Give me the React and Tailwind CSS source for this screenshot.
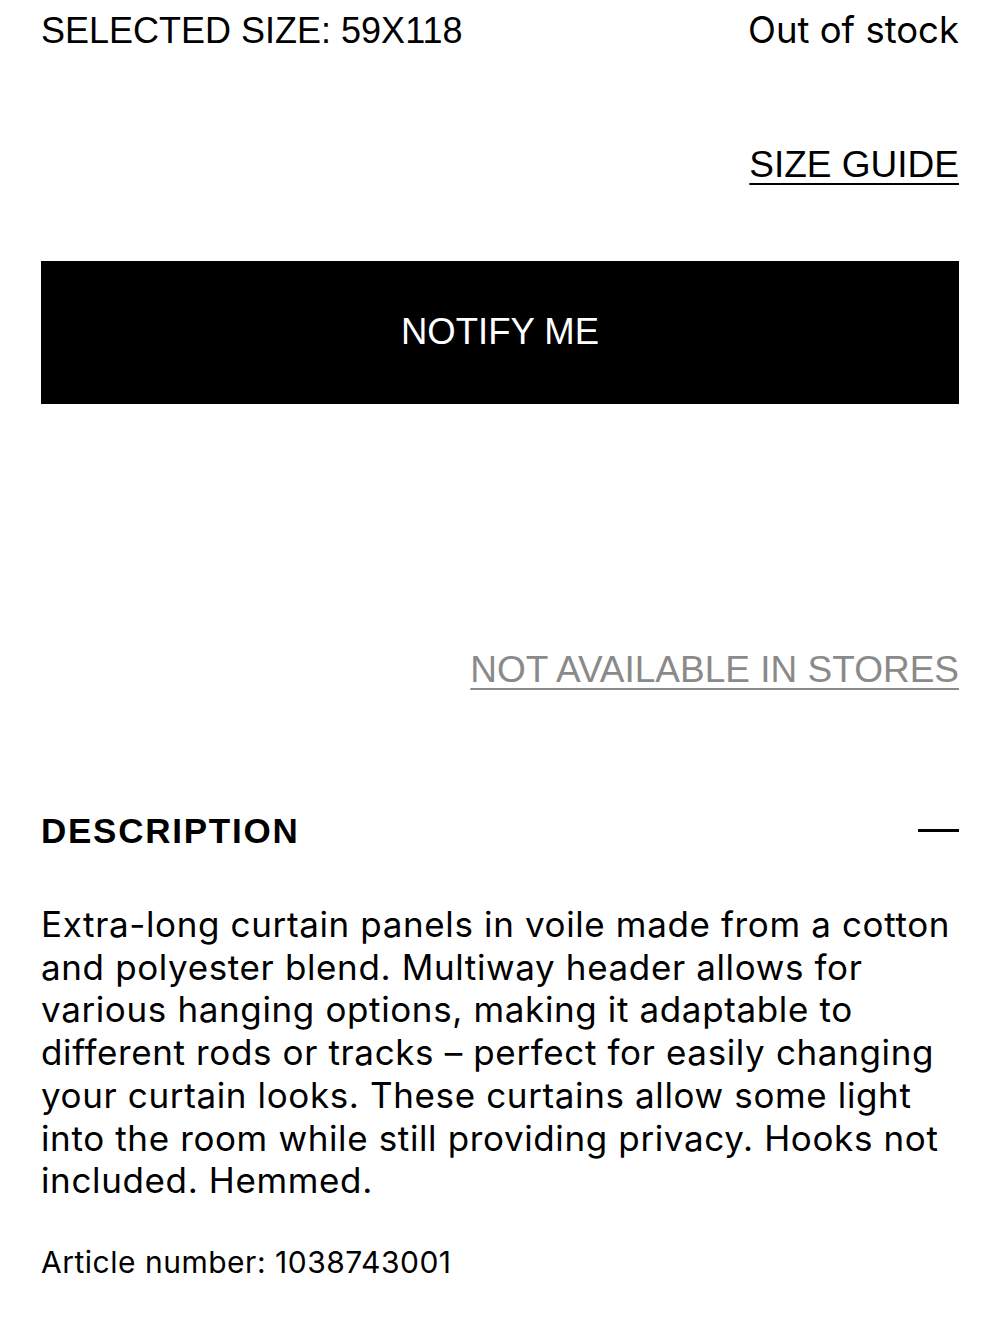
// Product purchase panel: size status, notify button, description accordion

import React from 'react';

const HELV = "font-['Liberation_Sans',Arial,sans-serif]";
const GROT = "font-['Inter',sans-serif]";

const DESCRIPTION_LINES = [
  'Extra-long curtain panels in voile made from a cotton',
  'and polyester blend. Multiway header allows for',
  'various hanging options, making it adaptable to',
  'different rods or tracks – perfect for easily changing',
  'your curtain looks. These curtains allow some light',
  'into the room while still providing privacy. Hooks not',
  'included. Hemmed.',
];

export default function App() {
  return (
    <div className="min-h-[1333px] bg-white px-[41px] text-black">
      {/* Selected size + stock status */}
      <div className="flex items-start justify-between pt-[9px]">
        <span className={`${HELV} text-[36px] leading-[43px]`}>SELECTED SIZE: 59X118</span>
        <span className={`${GROT} text-[36.5px] leading-[43px]`}>Out of stock</span>
      </div>

      <div className="mt-[91px] flex justify-end">
        <a
          href="#"
          className={`${HELV} text-[37px] leading-[43px] underline decoration-[2px] underline-offset-[6px]`}
        >
          SIZE GUIDE
        </a>
      </div>

      <button
        type="button"
        className={`${HELV} mt-[75px] flex h-[143px] w-full items-center justify-center bg-black text-[36.5px] text-white`}
      >
        NOTIFY ME
      </button>

      <div className="mt-[244px] flex justify-end">
        <a
          href="#"
          className={`${HELV} text-[37px] leading-[43px] text-[#8a8a8a] underline decoration-[2px] underline-offset-[6px]`}
        >
          NOT AVAILABLE IN STORES
        </a>
      </div>

      {/* Description accordion (open) */}
      <div className="mt-[118px] flex items-center justify-between">
        <h3 className={`${HELV} text-[35px] font-bold leading-[43px] tracking-[0.05em]`}>DESCRIPTION</h3>
        <span className="block h-[3px] w-[41px] bg-black" />
      </div>

      <p className={`${GROT} mt-[51px] text-[35px] leading-[42.7px] tracking-[0.018em]`}>
        {DESCRIPTION_LINES.map((line, i) => (
          <React.Fragment key={i}>
            {line}
            {i < DESCRIPTION_LINES.length - 1 && <br />}
          </React.Fragment>
        ))}
      </p>

      <p className={`${GROT} mt-[40px] text-[30px] leading-[40px] tracking-[0.017em]`}>
        Article number: 1038743001
      </p>
    </div>
  );
}
